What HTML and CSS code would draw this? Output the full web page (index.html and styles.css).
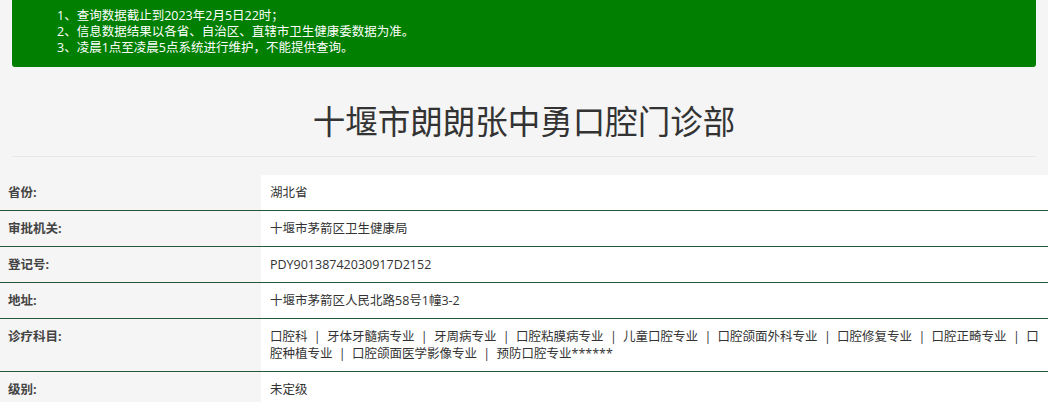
FILE: index.html
```html
<!DOCTYPE html>
<html lang="zh-CN">
<head>
<meta charset="utf-8">
<title>十堰市朗朗张中勇口腔门诊部</title>
<link rel="stylesheet" href="styles.css">
</head>
<body>
<div class="page">
  <div class="notice">
    <p>1、查询数据截止到2023年2月5日22时；</p>
    <p>2、信息数据结果以各省、自治区、直辖市卫生健康委数据为准。</p>
    <p>3、凌晨1点至凌晨5点系统进行维护，不能提供查询。</p>
  </div>
  <h1 class="title">十堰市朗朗张中勇口腔门诊部</h1>
  <div class="rule"></div>
  <div class="info">
    <div class="row"><div class="label">省份:</div><div class="value">湖北省</div></div>
    <div class="row"><div class="label">审批机关:</div><div class="value">十堰市茅箭区卫生健康局</div></div>
    <div class="row"><div class="label">登记号:</div><div class="value">PDY90138742030917D2152</div></div>
    <div class="row"><div class="label">地址:</div><div class="value">十堰市茅箭区人民北路58号1幢3-2</div></div>
    <div class="row"><div class="label">诊疗科目:</div><div class="value">口腔科<span class="sep">|</span>牙体牙髓病专业<span class="sep">|</span>牙周病专业<span class="sep">|</span>口腔粘膜病专业<span class="sep">|</span>儿童口腔专业<span class="sep">|</span>口腔颌面外科专业<span class="sep">|</span>口腔修复专业<span class="sep">|</span>口腔正畸专业<span class="sep">|</span>口腔种植专业<span class="sep">|</span>口腔颌面医学影像专业<span class="sep">|</span>预防口腔专业******</div></div>
    <div class="row"><div class="label">级别:</div><div class="value">未定级</div></div>
  </div>
</div>
</body>
</html>
```

FILE: styles.css
```css
html, body {
  margin: 0;
  padding: 0;
  background: #f5f5f5;
}
body {
  font-family: "Open Sans", "Noto Sans CJK SC", sans-serif;
  color: #333;
  font-size: 12.5px;
}
.page {
  display: flex;
  flex-direction: column;
}
.notice {
  margin: 0 12px;
  background: #007f00;
  color: #fff;
  padding: 8px 45px 11px;
  border-radius: 0 0 3px 3px;
  font-size: 12.5px;
  line-height: 16px;
}
.notice p {
  margin: 0;
}
.title {
  margin: 35px 0 0;
  text-align: center;
  font-size: 32.5px;
  line-height: 40px;
  font-weight: 400;
  color: #333;
}
.rule {
  margin: 14px 12px 0;
  height: 1px;
  background: #e8e8e8;
}
.info {
  margin-top: 18px;
  display: flex;
  flex-direction: column;
}
.row {
  display: grid;
  grid-template-columns: 261px 1fr;
  border-bottom: 1px solid #23583b;
}
.label {
  padding: 9px 8px;
  line-height: 17px;
  font-weight: 700;
  color: #444;
}
.value {
  background: #fff;
  padding: 9px 6px 9px 9px;
  line-height: 17px;
  color: #333;
}
.sep {
  display: inline-block;
  width: 19.5px;
  text-align: center;
}
```
